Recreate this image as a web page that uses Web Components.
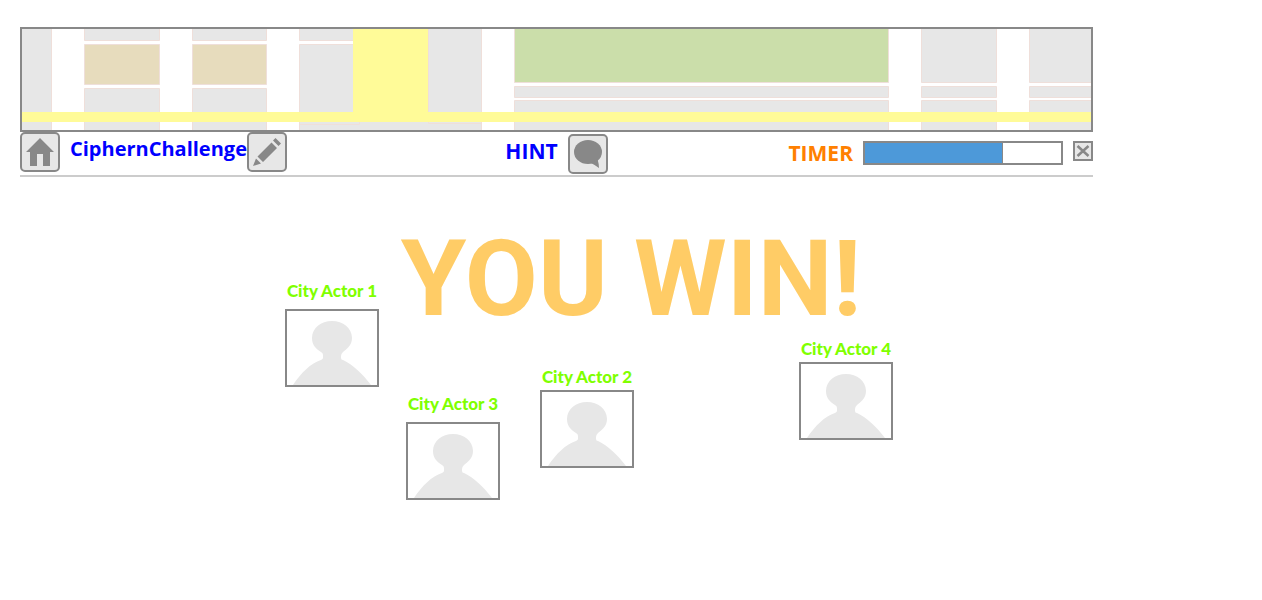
<!DOCTYPE html>
<html lang="en">
<head>
<meta charset="utf-8">
<title>CiphernChallenge</title>
<style>
body { margin: 0; background: #fff; font-family: Lato, "Noto Sans", sans-serif; font-weight: 900; }
</style>
</head>
<body>
<game-page>
  <city-map slot="map"></city-map>
  <game-toolbar slot="bar"></game-toolbar>
  <win-scene slot="scene">
    <city-actor name="City Actor 1" roomy style="--x:285px;--y:103px"></city-actor>
    <city-actor name="City Actor 3" roomy style="--x:406px;--y:216px"></city-actor>
    <city-actor name="City Actor 2" style="--x:540px;--y:189px"></city-actor>
    <city-actor name="City Actor 4" style="--x:799px;--y:161px"></city-actor>
  </win-scene>
</game-page>
<script>
function define(name, html, setup) {
  const template = document.createElement('template');
  template.innerHTML = html;
  customElements.define(name, class extends HTMLElement {
    constructor() {
      super();
      this.attachShadow({ mode: 'open' }).append(template.content.cloneNode(true));
    }
    connectedCallback() { if (setup) setup(this, this.shadowRoot); }
  });
}

define('game-page', `
<style>
  :host { display: block; padding-top: 27px; }
  header { margin: 0 169px 0 20px; }
</style>
<header><slot name="map"></slot><slot name="bar"></slot></header>
<main><slot name="scene"></slot></main>`);

define('city-map', `
<style>
  :host { display: block; border: 2px solid #888; }
  svg { display: block; width: 100%; height: 101px; }
  .block { fill: #e7e7e7; stroke: #efdfda; }
  .tan { fill: #e7dcbd; }
  .park { fill: #cbdeaa; }
  .road { fill: #fffb98; }
</style>
<svg viewBox="0 0 1069 101" preserveAspectRatio="xMinYMin slice" role="img" aria-label="City map">
  <g class="block">
    <path d="M-5.5-5.5h35v120h-35z"/>
    <path d="M62.5-5.5h75v17h-75zM62.5 59.5h75v60h-75z"/>
    <path d="M170.5-5.5h74v17h-74zM170.5 59.5h74v60h-74z"/>
    <path d="M277.5-5.5h60v17h-60zM277.5 15.5h60v80h-60zM406.5-5.5h53v100h-53zM277.5 90.5h182v20h-182z"/>
    <path d="M492.5 57.5h374v11h-374zM492.5 71.5h374v40h-374z"/>
    <path d="M899.5-5.5h75v59h-75zM899.5 57.5h75v11h-75zM899.5 71.5h75v40h-75z"/>
    <path d="M1007.5-5.5h75v59h-75zM1007.5 57.5h75v11h-75zM1007.5 71.5h75v40h-75z"/>
    <path class="tan" d="M62.5 15.5h75v40h-75zM170.5 15.5h74v40h-74z"/>
    <path class="park" d="M492.5-5.5h374v59h-374z"/>
  </g>
  <path class="road" d="M331 0h75v83h663v10H0V83h331z"/>
</svg>`);

const ICONS = {
  home: '<path d="M14 0 28 14H24V28H17V16H11V28H4V14H0Z"/>',
  edit: '<path d="M0 28 3 20.5 8 25.5ZM4.5 18.5 10 24 24 10 18.5 4.5ZM20 2.5 22.5 0 28 5.5 25.5 8Z"/>',
  chat: '<ellipse cx="14" cy="12" rx="14" ry="12"/><path d="M17 23Q21 25 25 28 25 24 23.5 19Z"/>',
  close: '<path d="M3 4 25 24M25 4 3 24" fill="none" stroke="#888" stroke-width="5"/>'
};

define('icon-button', `
<style>
  :host { display: block; flex: none; }
  button { display: grid; place-items: center; box-sizing: border-box; width: 40px; height: 40px; padding: 0;
    border: 2px solid #888; border-radius: 5px; background: #e7e7e7; cursor: pointer; }
  svg { display: block; width: 28px; height: 28px; fill: #888; }
  :host([small]) button { width: 20px; height: 20px; border-radius: 0; }
  :host([small]) svg { width: 14px; height: 14px; }
</style>
<button type="button"><svg viewBox="0 0 28 28" aria-hidden="true"></svg></button>`, (host, root) => {
  root.querySelector('svg').innerHTML = ICONS[host.getAttribute('icon')];
  root.querySelector('button').setAttribute('aria-label', host.getAttribute('label'));
});

define('game-toolbar', `
<style>
  :host { display: grid; grid-template-columns: 1fr auto 1fr; height: 43px; border-bottom: 2px solid #ccc;
    font-family: "Open Sans", sans-serif; font-weight: 700; font-size: 21px; line-height: 34px; }
  div { display: flex; align-items: flex-start; }
  h1 { margin: 0 0 0 10px; font: inherit; font-size: 20px; color: #00f; }
  .hint { gap: 10px; padding-top: 2px; color: #00f; }
  .timer { gap: 10px; justify-content: flex-end; padding-top: 9px; color: #ff8000; line-height: 24px; }
  progress { appearance: none; box-sizing: border-box; width: 200px; height: 24px; border: 2px solid #888; background: #fff; }
  progress::-webkit-progress-bar { background: #fff; }
  progress::-webkit-progress-value { box-sizing: border-box; background: #4d99d9; border-right: 1px solid #888; }
</style>
<div><icon-button icon="home" label="Home"></icon-button><h1>CiphernChallenge</h1><icon-button icon="edit" label="Edit name"></icon-button></div>
<div class="hint"><span>HINT</span><icon-button icon="chat" label="Hint"></icon-button></div>
<div class="timer"><label for="time">TIMER</label><progress id="time" max="196" value="138"></progress><icon-button small icon="close" label="Close"></icon-button></div>`);

define('win-scene', `
<style>
  :host { display: block; position: relative; min-height: 360px; padding-top: 40px; }
  h2 { margin: 0; text-align: center; font-family: Roboto, sans-serif; font-weight: 700; font-size: 106px; line-height: 124px; color: #fc6; }
</style>
<h2>YOU WIN!</h2>
<slot></slot>`);

define('city-actor', `
<style>
  :host { display: block; position: absolute; left: var(--x); top: var(--y); }
  figure { display: flex; flex-direction: column; gap: 2px; margin: 0; width: 94px; }
  :host([roomy]) figure { gap: 7px; }
  figcaption { font-size: 17px; line-height: 22px; color: #80ff00; white-space: nowrap; text-align: center; }
  svg { display: block; box-sizing: border-box; width: 94px; height: 78px; border: 2px solid #888; fill: #e7e7e7; }
</style>
<figure><figcaption></figcaption>
<svg viewBox="0 0 90 74" aria-hidden="true"><path d="M45 10C56 10 65 17 65 27 65 34 60 38 56 41Q54 43 54 45V47Q54 49 56 49C66 54 75 62 84 74H6C14 62 24 52 34 49Q36 48 36 47V44Q36 42 34 41C29 38 25 34 25 27 25 17 34 10 45 10Z"/></svg></figure>`, (host, root) => {
  root.querySelector('figcaption').textContent = host.getAttribute('name');
});
</script>
</body>
</html>
